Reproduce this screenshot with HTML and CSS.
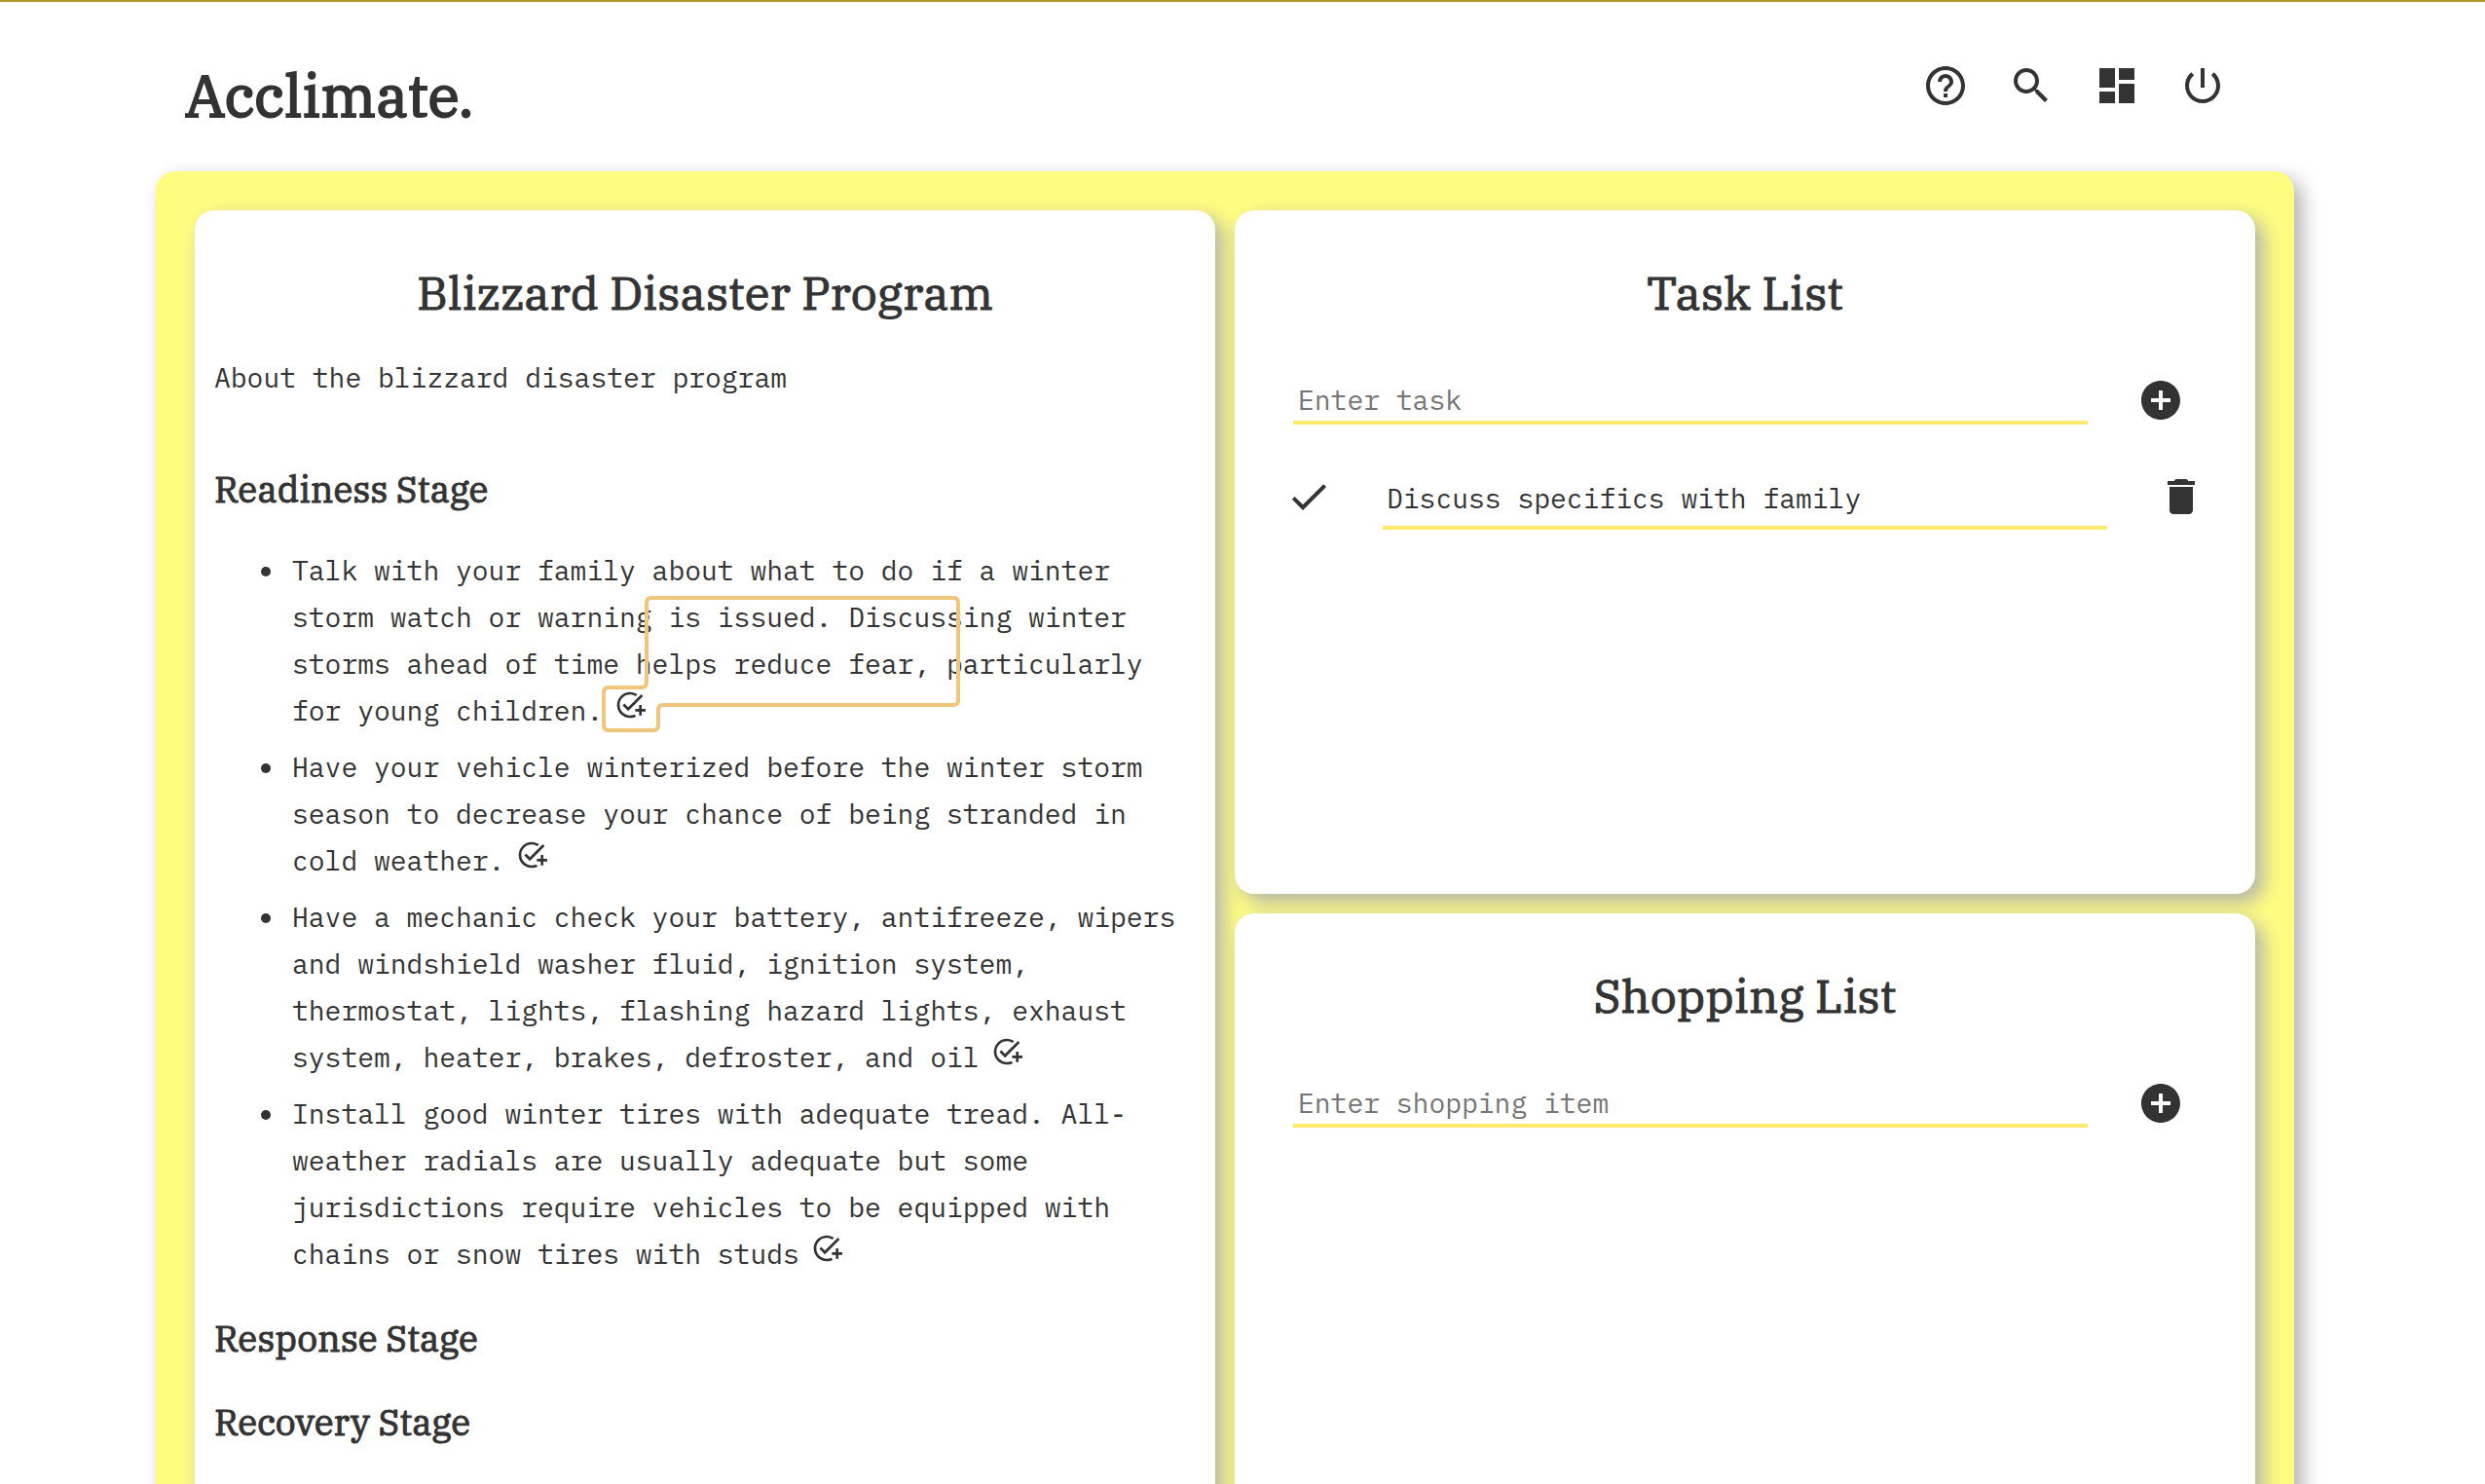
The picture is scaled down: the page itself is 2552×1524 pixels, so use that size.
FILE: index.html
```html
<!DOCTYPE html>
<html lang="en">
<head>
<meta charset="utf-8">
<meta name="viewport" content="width=device-width, initial-scale=1">
<title>Acclimate</title>
<link rel="stylesheet" href="styles.css">
</head>
<body>
<svg class="sprite" aria-hidden="true">
  <symbol id="add-task" viewBox="0 0 24 24"><path d="M22 5.18 10.59 16.6l-4.24-4.24 1.41-1.41 2.83 2.83 10-10L22 5.18zM12 20c-4.41 0-8-3.59-8-8s3.59-8 8-8c1.57 0 3.04.46 4.28 1.25l1.45-1.45C16.1 2.67 14.13 2 12 2 6.48 2 2 6.48 2 12s4.48 10 10 10c1.73 0 3.36-.44 4.78-1.22l-1.5-1.5c-1 .46-2.11.72-3.28.72zm7-5h-3v2h3v3h2v-3h3v-2h-3v-3h-2v3z"/></symbol>
  <symbol id="add-circle" viewBox="0 0 24 24"><path d="M12 2C6.48 2 2 6.48 2 12s4.48 10 10 10 10-4.48 10-10S17.52 2 12 2zm5 11h-4v4h-2v-4H7v-2h4V7h2v4h4v2z"/></symbol>
</svg>
<div class="page">
  <header class="header">
    <h1 class="brand">Acclimate.</h1>
    <nav class="nav" aria-label="Main">
      <a class="nav-link" href="#help" aria-label="Help"><svg class="icon" viewBox="0 0 24 24"><path d="M11 18h2v-2h-2v2zm1-16C6.48 2 2 6.48 2 12s4.48 10 10 10 10-4.48 10-10S17.52 2 12 2zm0 18c-4.41 0-8-3.59-8-8s3.59-8 8-8 8 3.590 8 8-3.590 8-8 8zm0-14c-2.210 0-4 1.790-4 4h2c0-1.100.9-2 2-2s2 .9 2 2c0 2-3 1.750-3 5h2c0-2.250 3-2.500 3-5 0-2.210-1.790-4-4-4z"/></svg></a>
      <a class="nav-link" href="#search" aria-label="Search"><svg class="icon" viewBox="0 0 24 24"><path d="M15.500 14h-.79l-.28-.27C15.410 12.590 16 11.110 16 9.500 16 5.910 13.090 3 9.500 3S3 5.910 3 9.500 5.910 16 9.500 16c1.610 0 3.090-.59 4.230-1.570l.27.28v.79l5 4.990L20.490 19l-4.990-5zm-6 0C7.010 14 5 11.990 5 9.500S7.010 5 9.500 5 14 7.010 14 9.500 11.990 14 9.500 14z"/></svg></a>
      <a class="nav-link" href="#dashboard" aria-label="Dashboard"><svg class="icon" viewBox="0 0 24 24"><path d="M3 13h8V3H3v10zm0 8h8v-6H3v6zm10 0h8V11h-8v10zm0-18v6h8V3h-8z"/></svg></a>
      <a class="nav-link" href="#logout" aria-label="Log out"><svg class="icon" viewBox="0 0 24 24"><path d="M13 3h-2v10h2V3zm4.830 2.170-1.420 1.420C17.990 7.860 19 9.810 19 12c0 3.870-3.130 7-7 7s-7-3.130-7-7c0-2.190 1.010-4.140 2.580-5.420L6.170 5.170C4.230 6.820 3 9.260 3 12c0 4.970 4.030 9 9 9s9-4.030 9-9c0-2.740-1.230-5.180-3.170-6.830z"/></svg></a>
    </nav>
  </header>
  <main class="board">
    <section class="card program">
      <h2 class="card-title">Blizzard Disaster Program</h2>
      <p class="about">About the blizzard disaster program</p>
      <h3 class="stage">Readiness Stage</h3>
      <ul class="steps">
        <li>Talk with your family about what to do if a winter storm watch or warning is issued. Discussing winter storms ahead of time helps reduce fear, particularly for young children.<button class="add-step" aria-label="Add to task list"><svg class="icon-small"><use href="#add-task"/></svg><svg class="focus-outline" viewBox="0 0 368 140"><path d="M51 2H361Q366 2 366 7V107Q366 112 361 112H63Q58 112 58 117V133Q58 138 53 138H7Q2 138 2 133V99Q2 94 7 94H41Q46 94 46 89V7Q46 2 51 2Z"/></svg></button></li>
        <li>Have your vehicle winterized before the winter storm season to decrease your chance of being stranded in cold weather.<button class="add-step" aria-label="Add to task list"><svg class="icon-small"><use href="#add-task"/></svg></button></li>
        <li>Have a mechanic check your battery, antifreeze, wipers and windshield washer fluid, ignition system, thermostat, lights, flashing hazard lights, exhaust system, heater, brakes, defroster, and oil<button class="add-step" aria-label="Add to task list"><svg class="icon-small"><use href="#add-task"/></svg></button></li>
        <li>Install good winter tires with adequate tread. All-weather radials are usually adequate but some jurisdictions require vehicles to be equipped with chains or snow tires with studs<button class="add-step" aria-label="Add to task list"><svg class="icon-small"><use href="#add-task"/></svg></button></li>
      </ul>
      <h3 class="stage">Response Stage</h3>
      <h3 class="stage">Recovery Stage</h3>
    </section>
    <section class="card">
      <h2 class="card-title">Task List</h2>
      <form class="entry">
        <input class="entry-input" type="text" placeholder="Enter task" aria-label="Task">
        <button class="icon-button" type="button" aria-label="Add task"><svg class="icon"><use href="#add-circle"/></svg></button>
      </form>
      <ul class="items">
        <li class="item">
          <button class="icon-button" type="button" aria-label="Mark done"><svg class="icon" viewBox="0 0 24 24"><path d="M9 16.170 4.830 12l-1.420 1.410L9 19 21 7l-1.410-1.410z"/></svg></button>
          <span class="item-text">Discuss specifics with family</span>
          <button class="icon-button" type="button" aria-label="Delete task"><svg class="icon" viewBox="0 0 24 24"><path d="M6 19c0 1.100.9 2 2 2h8c1.100 0 2-.9 2-2V7H6v12zM19 4h-3.500c0-.6-.5-1-1-1h-5c-.5 0-1 .4-1 1H5v2h14V4z"/></svg></button>
        </li>
      </ul>
    </section>
    <section class="card">
      <h2 class="card-title">Shopping List</h2>
      <form class="entry">
        <input class="entry-input" type="text" placeholder="Enter shopping item" aria-label="Shopping item">
        <button class="icon-button" type="button" aria-label="Add shopping item"><svg class="icon"><use href="#add-circle"/></svg></button>
      </form>
    </section>
  </main>
</div>
</body>
</html>
```
FILE: styles.css
```css
* {
  box-sizing: border-box;
}

body {
  height: 100vh;
  margin: 0;
  overflow: hidden;
  border-top: 2px solid #ae9a2f;
  background: #fff;
  color: #333;
  font-family: "IBM Plex Mono", "Liberation Mono", monospace;
  font-size: 28px;
  line-height: 48px;
}

h1, h2, h3, p, ul {
  margin: 0;
  padding: 0;
}

h1, h2, h3 {
  font-family: "IBM Plex Serif", "DejaVu Serif Condensed", "DejaVu Serif", serif;
  font-weight: 400;
  -webkit-text-stroke: 1px #333;
}

button {
  padding: 0;
  border: 0;
  background: none;
  color: inherit;
  font: inherit;
}

svg {
  display: block;
  fill: currentColor;
}

.sprite {
  position: absolute;
  width: 0;
  height: 0;
}

.page {
  padding: 0 196px 0 160px;
}

.header {
  display: flex;
  justify-content: space-between;
  align-items: flex-start;
  height: 174px;
  padding: 62px 70px 0 30px;
}

.brand {
  font-size: 60px;
  line-height: 68px;
  -webkit-text-stroke-width: 2px;
}

.nav {
  display: flex;
  gap: 40px;
}

.nav-link {
  color: inherit;
}

.icon {
  width: 48px;
  height: 48px;
}

.icon-small {
  width: 32px;
  height: 32px;
}

.board {
  display: grid;
  grid-template-columns: 1fr 1fr;
  grid-template-rows: minmax(702px, auto) 1fr;
  gap: 20px;
  min-height: 100vh;
  padding: 40px;
  border-radius: 20px;
  background: #fffd80;
  box-shadow: 8px 8px 20px #b0b0b0;
}

.card {
  padding: 50px 60px;
  border-radius: 20px;
  background: #fff;
  box-shadow: 8px 8px 20px #b0b0b0;
}

.program {
  grid-row: span 2;
  padding: 50px 20px;
}

.card-title {
  font-size: 48px;
  line-height: 68px;
  text-align: center;
}

.about {
  margin: 30px 0 62px;
}

.stage {
  margin-bottom: 30px;
  font-size: 37px;
  line-height: 56px;
}

.steps {
  margin: 32px 0 34px;
  padding-left: 80px;
  list-style: none;
}

.steps li {
  margin-bottom: 10px;
}

.steps li::before {
  content: "";
  display: inline-block;
  width: 10px;
  height: 10px;
  margin: 0 22px 0 -32px;
  border-radius: 50%;
  background: #333;
  vertical-align: 4px;
}

.add-step {
  position: relative;
  margin-top: -8px;
  padding: 0 12px;
  vertical-align: baseline;
}

.focus-outline {
  position: absolute;
  top: -96px;
  left: -1px;
  width: 368px;
  height: 140px;
  overflow: visible;
  fill: none;
  stroke: #f0c67d;
  stroke-width: 4px;
  pointer-events: none;
}

.entry {
  display: flex;
  gap: 51px;
  margin: 52px 13px 50px 0;
}

.entry-input {
  flex: 1;
  min-width: 0;
  height: 50px;
  padding: 2px 5px 0;
  border: 0;
  border-bottom: 4px solid #fdea6d;
  background: none;
  color: inherit;
  font: inherit;
  outline: none;
}

.entry-input::placeholder {
  color: #757575;
  opacity: 1;
}

.items {
  list-style: none;
}

.item {
  display: flex;
  align-items: flex-start;
  gap: 52px;
  margin: 0 -8px;
}

.item-text {
  flex: 1;
  height: 58px;
  padding: 2px 4px 0;
  border-bottom: 4px solid #fdea6d;
}
```
